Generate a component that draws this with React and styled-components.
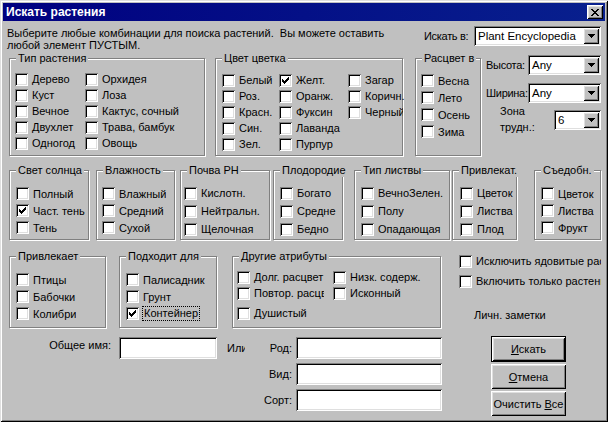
import React from "react";
import styled, { createGlobalStyle } from "styled-components";

const GlobalStyle = createGlobalStyle`
  html, body {
    margin: 0;
    padding: 0;
  }
  body {
    background: #c0c0c0;
    font-family: "Liberation Sans", Arial, sans-serif;
    font-size: 11px;
    color: #000;
  }
  * {
    box-sizing: border-box;
  }
`;

const raised = `
  background: #c0c0c0;
  box-shadow: inset 1px 1px #fff, inset -1px -1px #000,
    inset 2px 2px #dfdfdf, inset -2px -2px #808080;
`;

const sunken = `
  background: #fff;
  box-shadow: inset 1px 1px #808080, inset -1px -1px #fff,
    inset 2px 2px #000, inset -2px -2px #dfdfdf;
`;

const Window = styled.div`
  width: 608px;
  height: 422px;
  padding: 3px;
  display: flex;
  flex-direction: column;
  overflow: hidden;
  background: #c0c0c0;
  box-shadow: inset 1px 1px #dfdfdf, inset -1px -1px #000,
    inset 2px 2px #fff, inset -2px -2px #808080;
`;

const TitleBar = styled.div`
  flex: none;
  height: 18px;
  display: flex;
  align-items: center;
  justify-content: space-between;
  padding: 0 2px 0 3px;
  background: linear-gradient(to right, #000080, #08208e);
  color: #fff;
  font-size: 12px;
  font-weight: bold;
`;

const CloseButton = styled.div`
  width: 16px;
  height: 14px;
  display: flex;
  align-items: center;
  justify-content: center;
  ${raised}
`;

const Body = styled.div`
  display: flex;
  flex-direction: column;
  padding: 0 4px;
`;

const Header = styled.div`
  display: flex;
  justify-content: space-between;
  align-items: flex-start;
  padding-top: 5px;
`;

const Intro = styled.p`
  margin: 1px 0 0;
  line-height: 12px;
  white-space: pre;
`;

const Field = styled.div`
  display: flex;
  align-items: center;
  margin-top: ${(p) => p.$mt || 0}px;
`;

const FieldLabel = styled.span`
  flex: none;
  width: ${(p) => p.$w}px;
  white-space: nowrap;
  letter-spacing: -0.3px;
`;

const SelectBox = styled.div`
  flex: none;
  width: ${(p) => p.$w}px;
  height: 20px;
  padding: 2px;
  display: flex;
  align-items: center;
  ${sunken}
`;

const SelectText = styled.span`
  flex: 1;
  padding-left: 2px;
  font-size: 11.5px;
  white-space: nowrap;
  overflow: hidden;
`;

const DropButton = styled.div`
  width: 16px;
  height: 16px;
  flex: none;
  display: flex;
  align-items: center;
  justify-content: center;
  ${raised}
`;

const Row = styled.div`
  display: flex;
  align-items: flex-start;
  padding-left: 2px;
  margin-top: ${(p) => p.$mt}px;
`;

const Group = styled.div`
  position: relative;
  flex: none;
  display: flex;
  width: ${(p) => p.$w}px;
  height: ${(p) => p.$h}px;
  margin-left: ${(p) => p.$ml || 0}px;
  padding: ${(p) => p.$pt}px 0 0 ${(p) => p.$pl}px;
  border: 1px solid #808080;
  box-shadow: inset 1px 1px #fff, 1px 1px #fff;
`;

const GroupTitle = styled.span`
  position: absolute;
  top: -7px;
  left: 6px;
  padding: 0 2px;
  line-height: 13px;
  background: #c0c0c0;
  white-space: nowrap;
`;

const CheckColumn = styled.div`
  display: flex;
  flex-direction: column;
  flex: none;
  ${(p) => p.$w && `width: ${p.$w}px;`}
`;

const CheckRow = styled.label`
  display: flex;
  align-items: center;
  gap: 4px;
  height: ${(p) => p.$h}px;
  margin-top: ${(p) => p.$mt || 0}px;
  white-space: nowrap;
  overflow: hidden;
  ${(p) => p.$clip && `width: ${p.$clip}px;`}
`;

const Box = styled.span`
  flex: none;
  width: 13px;
  height: 13px;
  padding: 3px;
  ${sunken}
`;

const FocusText = styled.span`
  outline: 1px dotted #000;
  padding: 0 1px;
  line-height: 13px;
`;

const SideColumn = styled.div`
  flex: none;
  display: flex;
  flex-direction: column;
  width: ${(p) => p.$w}px;
  margin-left: ${(p) => p.$ml}px;
  margin-top: -3px;
`;

const ZoneLabel = styled.span`
  flex: none;
  width: 68px;
  padding-left: 14px;
  margin-top: -2px;
  line-height: 16px;
  align-self: flex-start;
`;

const Notes = styled.span`
  margin-top: 20px;
  padding-left: 15px;
  line-height: 13px;
`;

const Bottom = styled.div`
  display: flex;
  align-items: flex-start;
  margin-top: 9px;
`;

const NameLabel = styled.span`
  width: 104px;
  margin: 2px 8px 0 0;
  text-align: right;
  line-height: 13px;
`;

const TextInput = styled.div`
  width: ${(p) => p.$w}px;
  height: 22px;
  ${sunken}
`;

const OrLabel = styled.span`
  width: 18px;
  margin: 5px 0 0 10px;
  overflow: hidden;
  white-space: nowrap;
  line-height: 13px;
`;

const TaxonGrid = styled.div`
  display: grid;
  grid-template-columns: 42px 146px;
  column-gap: 4px;
  row-gap: 4px;
  align-items: center;
  margin-left: 5px;
`;

const TaxonLabel = styled.span`
  text-align: right;
`;

const Buttons = styled.div`
  display: flex;
  flex-direction: column;
  gap: 2px;
  margin: -1px 0 0 49px;
`;

const Button = styled.div`
  width: 75px;
  height: ${(p) => (p.$default ? 26 : 25)}px;
  display: flex;
  align-items: center;
  justify-content: center;
  white-space: nowrap;
  ${raised}
  ${(p) => p.$default && `border: 1px solid #000;`}
`;

const CheckMark = () => (
  <svg width="7" height="7" viewBox="0 0 7 7" style={{ display: "block" }}>
    {[2, 3, 4, 3, 2, 1, 0].map((y, x) => (
      <rect key={x} x={x} y={y} width="1" height="3" fill="#000" />
    ))}
  </svg>
);

const DownArrow = () => (
  <svg width="7" height="4" viewBox="0 0 7 4" style={{ display: "block" }}>
    {[7, 5, 3, 1].map((w, y) => (
      <rect key={y} x={(7 - w) / 2} y={y} width={w} height="1" fill="#000" />
    ))}
  </svg>
);

const CloseGlyph = () => {
  const rows = [
    [0, 1, 6, 7],
    [1, 2, 5, 6],
    [2, 3, 4, 5],
    [3, 4],
    [2, 3, 4, 5],
    [1, 2, 5, 6],
    [0, 1, 6, 7],
  ];
  return (
    <svg width="8" height="7" viewBox="0 0 8 7" style={{ display: "block" }}>
      {rows.map((xs, y) =>
        xs.map((x) => (
          <rect key={`${x}-${y}`} x={x} y={y} width="1" height="1" fill="#000" />
        ))
      )}
    </svg>
  );
};

const Select = ({ w, value }) => (
  <SelectBox $w={w}>
    <SelectText>{value}</SelectText>
    <DropButton>
      <DownArrow />
    </DropButton>
  </SelectBox>
);

const Check = ({ label, checked, focus, h = 16, clip, mt }) => (
  <CheckRow $h={h} $clip={clip} $mt={mt}>
    <Box>{checked && <CheckMark />}</Box>
    {focus ? <FocusText>{label}</FocusText> : <span>{label}</span>}
  </CheckRow>
);

const CheckList = ({ items, h, w }) => (
  <CheckColumn $w={w}>
    {items.map((item) =>
      typeof item === "string" ? (
        <Check key={item} label={item} h={h} />
      ) : (
        <Check key={item.label} h={h} {...item} />
      )
    )}
  </CheckColumn>
);

const SmallGroup = ({ title, items, w, ml, pl, h = 18 }) => (
  <Group $w={w} $h={70} $ml={ml} $pt={h === 17 ? 14 : 13} $pl={pl}>
    <GroupTitle>{title}</GroupTitle>
    <CheckList items={items} h={h} />
  </Group>
);

export default function App() {
  return (
    <>
      <GlobalStyle />
      <Window>
        <TitleBar>
          <span>Искать растения</span>
          <CloseButton>
            <CloseGlyph />
          </CloseButton>
        </TitleBar>

        <Body>
          <Header>
            <Intro>
              {"Выберите любые комбинации для поиска растений.  Вы можете оставить\nлюбой элемент ПУСТЫМ."}
            </Intro>
            <Field>
              <FieldLabel $w={50}>Искать в:</FieldLabel>
              <Select w={127} value="Plant Encyclopedia" />
            </Field>
          </Header>

          <Row $mt={7}>
            <Group $w={196} $h={98} $pt={12} $pl={5}>
              <GroupTitle>Тип растения</GroupTitle>
              <CheckList w={70} items={["Дерево", "Куст", "Вечное", "Двухлет", "Одногод"]} />
              <CheckList items={["Орхидея", "Лоза", "Кактус, сочный", "Трава, бамбук", "Овощь"]} />
            </Group>

            <Group $w={188} $h={98} $ml={10} $pt={13} $pl={6}>
              <GroupTitle>Цвет цветка</GroupTitle>
              <CheckList w={57} items={["Белый", "Роз.", "Красн.", "Син.", "Зел."]} />
              <CheckList
                w={69}
                items={[{ label: "Желт.", checked: true }, "Оранж.", "Фуксин", "Лаванда", "Пурпур"]}
              />
              <CheckList
                w={60}
                items={["Загар", "Коричн.", { label: "Черный", clip: 55 }]}
              />
            </Group>

            <Group $w={66} $h={98} $ml={12} $pt={13} $pl={5}>
              <GroupTitle>Расцвет в</GroupTitle>
              <CheckList h={17} items={["Весна", "Лето", "Осень", "Зима"]} />
            </Group>

            <SideColumn $w={115} $ml={5}>
              <Field>
                <FieldLabel $w={42}>Высота:</FieldLabel>
                <Select w={73} value="Any" />
              </Field>
              <Field $mt={8}>
                <FieldLabel $w={42}>Ширина:</FieldLabel>
                <Select w={73} value="Any" />
              </Field>
              <Field $mt={2}>
                <ZoneLabel>
                  Зона
                  <br />
                  трудн.:
                </ZoneLabel>
                <Select w={47} value="6" />
              </Field>
            </SideColumn>
          </Row>

          <Row $mt={14}>
            <SmallGroup title="Свет солнца" w={80} pl={6} h={17}
              items={["Полный", { label: "Част. тень", checked: true }, "Тень"]} />
            <SmallGroup title="Влажность" w={79} ml={7} pl={5} h={17}
              items={["Влажный", "Средний", "Сухой"]} />
            <SmallGroup title="Почва PH" w={90} ml={5} pl={3}
              items={["Кислотн.", "Нейтральн.", "Щелочная"]} />
            <SmallGroup title="Плодородие" w={70} ml={3} pl={6}
              items={["Богато", "Средне", "Бедно"]} />
            <SmallGroup title="Тип листвы" w={96} ml={11} pl={6}
              items={["ВечноЗелен.", "Полу", "Опадающая"]} />
            <SmallGroup title="Привлекат." w={65} ml={2} pl={7}
              items={["Цветок", "Листва", "Плод"]} />
            <SmallGroup title="Съедобн." w={67} ml={17} pl={6} h={17}
              items={["Цветок", "Листва", "Фрукт"]} />
          </Row>

          <Row $mt={16}>
            <Group $w={97} $h={72} $pt={14} $pl={6}>
              <GroupTitle>Привлекает</GroupTitle>
              <CheckList h={17} items={["Птицы", "Бабочки", "Колибри"]} />
            </Group>

            <Group $w={98} $h={72} $ml={13} $pt={14} $pl={6}>
              <GroupTitle>Подходит для</GroupTitle>
              <CheckList
                h={17}
                items={["Палисадник", "Грунт", { label: "Контейнер", checked: true, focus: true }]}
              />
            </Group>

            <Group $w={209} $h={72} $ml={15} $pt={12} $pl={4}>
              <GroupTitle>Другие атрибуты</GroupTitle>
              <CheckList
                w={96}
                items={[
                  "Долг. расцвет",
                  { label: "Повтор. расцвет", clip: 87 },
                  { label: "Душистый", mt: 4 },
                ]}
              />
              <CheckList items={["Низк. содерж.", "Исконный"]} />
            </Group>

            <SideColumn $w={142} $ml={18}>
              <Check label="Исключить ядовитые растения" />
              <Check label="Включить только растения с фото" mt={4} />
              <Notes>Личн. заметки</Notes>
            </SideColumn>
          </Row>

          <Bottom>
            <NameLabel>Общее имя:</NameLabel>
            <TextInput $w={98} />
            <OrLabel>Или</OrLabel>
            <TaxonGrid>
              <TaxonLabel>Род:</TaxonLabel>
              <TextInput $w={146} />
              <TaxonLabel>Вид:</TaxonLabel>
              <TextInput $w={146} />
              <TaxonLabel>Сорт:</TaxonLabel>
              <TextInput $w={146} />
            </TaxonGrid>
            <Buttons>
              <Button $default>
                <span><u>И</u>скать</span>
              </Button>
              <Button>
                <span><u>О</u>тмена</span>
              </Button>
              <Button>
                <span>Очистить <u>В</u>се</span>
              </Button>
            </Buttons>
          </Bottom>
        </Body>
      </Window>
    </>
  );
}
